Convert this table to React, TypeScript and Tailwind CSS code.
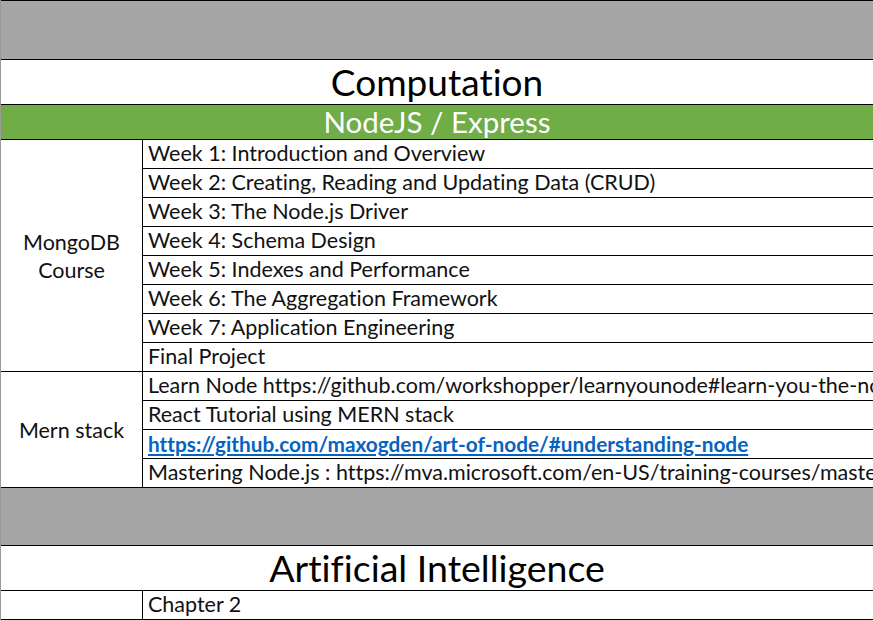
const FONT = { fontFamily: 'Lato, "Open Sans", sans-serif' };

const MONGO = [
  'Week 1: Introduction and Overview',
  'Week 2: Creating, Reading and Updating Data (CRUD)',
  'Week 3: The Node.js Driver',
  'Week 4: Schema Design',
  'Week 5: Indexes and Performance',
  'Week 6: The Aggregation Framework',
  'Week 7: Application Engineering',
  'Final Project',
];

function Cell({ children, link }: { children: React.ReactNode; link?: boolean }) {
  return (
    <div className="h-[29px] border-b border-black pl-[5px] flex items-center whitespace-nowrap overflow-hidden">
      {link ? (
        <span className="text-[#0563c1] font-bold underline text-[20.8px] leading-none">{children}</span>
      ) : (
        <span className="text-[21.5px] leading-none text-[#111]">{children}</span>
      )}
    </div>
  );
}

function Group({ label, children }: { label: React.ReactNode; children: React.ReactNode }) {
  return (
    <div className="flex">
      <div className="w-[142px] shrink-0 border-r border-b border-black flex items-center justify-center text-center text-[21.5px] leading-[28px] text-[#111]">
        {label}
      </div>
      <div className="flex-1 min-w-0">{children}</div>
    </div>
  );
}

export default function App() {
  return (
    <div className="w-[873px] h-[620px] overflow-hidden bg-white border-l border-[#9a9a9a] [font-variant-ligatures:none]" style={FONT}>
      <div className="h-[60px] bg-[#a6a6a6] border-t border-[#959595] border-b border-black" />
      <div className="h-[45px] border-b border-black flex items-center justify-center text-[37px] text-black">
        Computation
      </div>
      <div className="h-[35px] bg-[#70ad47] border-b border-black flex items-center justify-center text-[29.5px] text-white">
        NodeJS / Express
      </div>
      <Group label={<>MongoDB<br />Course</>}>
        {MONGO.map((m) => (
          <Cell key={m}>{m}</Cell>
        ))}
      </Group>
      <Group label="Mern stack">
        <Cell>Learn Node https://github.com/workshopper/learnyounode#learn-you-the-node.js-for-much-win</Cell>
        <Cell>React Tutorial using MERN stack</Cell>
        <Cell link>https://github.com/maxogden/art-of-node/#understanding-node</Cell>
        <Cell>Mastering Node.js : https://mva.microsoft.com/en-US/training-courses/mastering-nodejs</Cell>
      </Group>
      <div className="h-[58px] bg-[#a6a6a6] border-b border-black" />
      <div className="h-[45px] border-b border-black flex items-center justify-center text-[37.5px] text-black">
        Artificial Intelligence
      </div>
      <Group label="">
        <Cell>Chapter 2</Cell>
      </Group>
    </div>
  );
}
